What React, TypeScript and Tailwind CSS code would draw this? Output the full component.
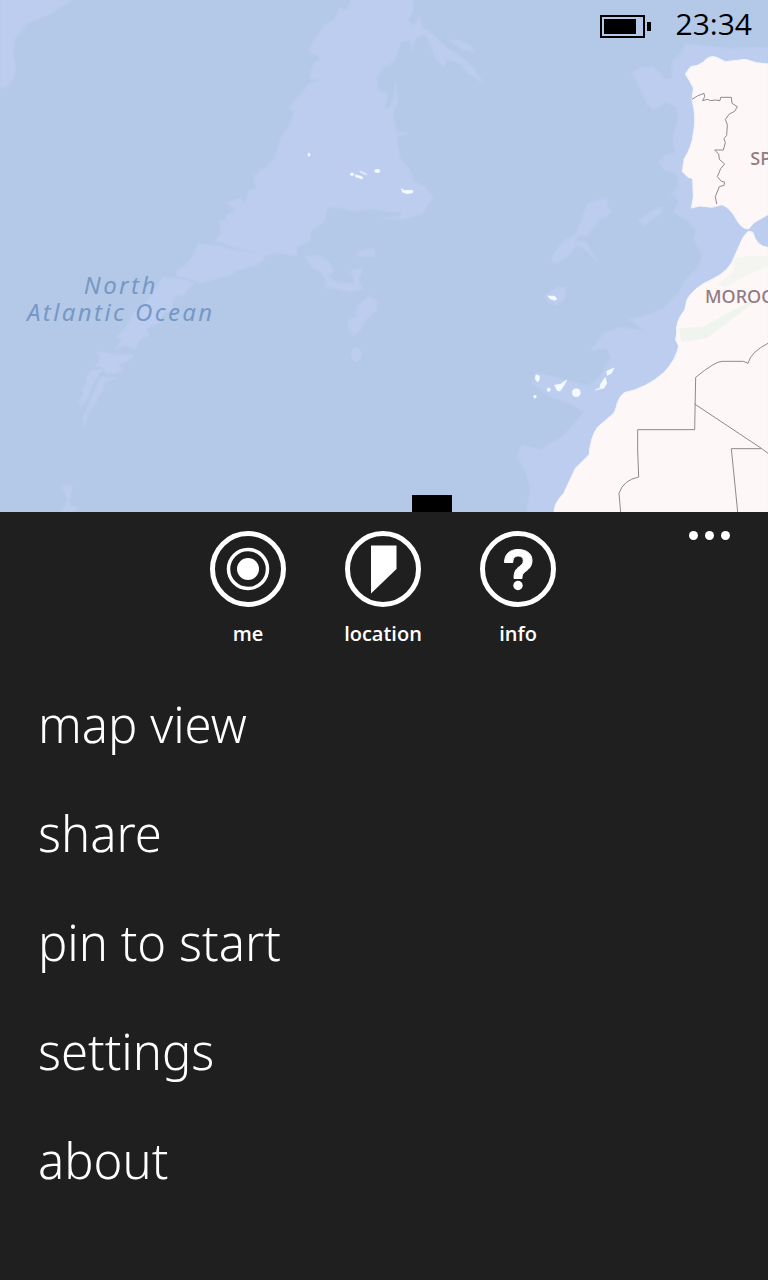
import type { ReactNode } from "react";

const shelves = [
  // north-west corner
  "M0 0H215L150 42L90 65L62 92L42 120L40 170L47 205L42 230L18 262L0 264Z",
  // mid-Atlantic ridge and Azores plateau
  "M1053 0L1040 32L1018 25L1003 60L975 75L950 110L926 152L948 166L962 172L938 198L928 236L962 239L928 250L900 288L886 300L870 320L882 342L862 388L845 408L822 480L805 492L795 508L780 508L768 530L760 525L768 565L748 572L735 612L722 596L682 608L708 630L680 645L676 662L658 664L664 700L646 724L668 728L690 738L730 748L768 756L700 750L660 738L594 732L580 768L556 796L530 815L534 828L580 838L602 849L640 838L690 826L710 810L768 796L792 778L790 768L830 758L888 767L892 742L930 720L934 690L950 680L973 664L983 622L1018 622L1060 632L1118 626L1170 636L1208 634L1200 648L1150 655L1208 658L1266 642L1280 620L1300 592L1275 562L1238 542L1234 515L1200 475L1192 430L1190 408L1224 400L1190 396L1178 350L1182 330L1194 308L1186 250L1180 300L1168 325L1150 326L1162 298L1160 280L1135 272L1128 234L1153 200L1184 182L1203 125L1230 120L1236 148L1248 114L1274 102L1294 138L1304 172L1330 198L1343 176L1382 192L1408 222L1450 250L1418 202L1382 170L1340 144L1298 104L1270 86L1258 52L1240 80L1222 60L1240 30L1238 0Z",
  "M1350 122L1380 122L1412 138L1422 156L1390 148Z",
  // south-western arm of the ridge
  "M490 832L530 836L582 848L550 884L520 890L514 930L488 942L478 968L440 984L446 1004L420 1020L404 1048L376 1034L346 1048L368 1020L350 1010L380 980L400 940L430 920Z",
  "M292 1056L340 1064L400 1066L384 1082L354 1092L368 1110L340 1120L318 1118L306 1100L286 1096L302 1080Z",
  "M306 1108L286 1136L270 1172L260 1198L248 1212L234 1210L250 1184L246 1168L262 1150L260 1130L274 1112Z",
  "M304 1132L344 1134L310 1150L310 1170L294 1190L288 1206L266 1234L258 1260L254 1278L248 1256L264 1224L276 1190Z",
  "M186 1458L216 1458L206 1516L236 1524L214 1536H184L204 1500Z",
  // seamounts south of the Azores
  "M916 770L960 768L990 788L1000 816L984 828L1010 848L1062 852L1060 820L1046 824L1060 808L1086 806L1076 842L1088 868L1050 874L1020 868L974 862L982 850L966 820L934 800Z",
  "M1076 756L1100 748L1122 746L1124 768H1070Z",
  "M1108 888L1130 904L1130 930L1102 954L1080 990L1062 1008L1044 982L1046 962L1070 948L1072 918Z",
  // Madeira rise
  "M1764 610L1820 594L1822 620L1834 632L1818 650L1800 656L1760 708L1740 706L1722 724L1756 724L1782 768L1792 784L1776 768L1750 744L1730 734L1704 768L1672 788H1660L1656 768L1690 724L1726 706L1752 640Z",
  "M1988 622L1980 642L1950 662L1932 678L1916 662L1938 644L1970 626Z",
  "M1632 890L1660 870L1672 862L1698 864L1696 882L1688 904L1668 916L1646 906Z",
  // continental shelf of Iberia and north-west Africa
  "M2304 142L2180 146L2056 132L2046 158L2018 182L2014 236L1996 238L1976 216L1960 202L1920 202L1896 222L1914 250L1930 285L1942 315L1962 328L2000 306L2030 322L2036 356L2018 420L2026 458L1998 466L1976 488L1994 510L2030 520L2034 560L2014 580L2038 600L2022 636L2062 662L2088 688L2082 720L2108 766L2096 800L2060 834L2038 876L1990 926L1940 946L1890 958L1938 994L1860 982L1812 1000L1776 1048L1820 1044L1834 1072L1800 1130L1764 1158L1700 1142L1610 1118L1596 1150L1650 1188L1720 1214L1752 1236L1690 1308L1620 1350L1566 1336L1552 1370L1580 1420L1592 1470L1580 1536H2304Z",
];

const land =
  "M2304 192L2270 188L2236 178L2176 185L2150 172Q2128 164 2110 186L2092 196L2072 200L2056 222L2070 245L2080 264L2076 300Q2090 350 2080 400Q2076 440 2052 478L2047 515L2064 532L2078 536L2080 590L2074 624L2100 618L2136 622L2166 614Q2192 624 2210 660Q2226 688 2246 687L2262 668L2304 644ZM2244 694L2228 714L2204 768Q2190 812 2136 838Q2084 860 2061 898L2054 930Q2026 964 2030 998L2027 1020L2036 1038Q2028 1080 1991 1118Q1940 1164 1872 1178Q1858 1190 1852 1208Q1846 1238 1836 1244L1792 1282Q1772 1310 1767 1364L1726 1405L1691 1480Q1662 1510 1662 1536H2304V742Q2270 740 2258 696Z";

const borders = [
  "M2076 298L2092 288L2112 280L2114 290L2108 302L2122 298L2132 302L2146 300L2160 302L2162 292H2194L2196 310L2212 320L2204 334L2188 342L2176 358L2182 374L2180 406L2172 416L2176 428L2170 450H2144L2156 462L2158 478L2174 492L2162 506L2152 530L2164 544L2174 546L2172 556L2158 560L2146 590L2150 612",
  "M2304 1030Q2252 1056 2244 1090L2230 1084H2166Q2146 1084 2087 1132L2084 1289H1913V1350L1916 1431Q1870 1440 1857 1480L1862 1536",
  "M2084 1212L2284 1345L2304 1360",
  "M2284 1346H2194L2213 1536",
];

function OceanMap() {
  return (
    <svg
      viewBox="0 0 2304 1536"
      className="block h-full w-full"
      preserveAspectRatio="xMidYMid slice"
      role="img"
      aria-label="Map"
    >
      <rect width="2304" height="1536" fill="#b4c9e7" />
      <g fill="#bdcdef">
        {shelves.map((d) => (
          <path key={d} d={d} stroke="#bacced" strokeWidth="5" strokeLinejoin="round" />
        ))}
        <ellipse cx="1069" cy="1063" rx="16" ry="21" />
      </g>
      <path d={land} fill="#fef7f7" stroke="#f4f4fa" strokeWidth="3" strokeLinejoin="round" />
      <g fill="#f0f4ee">
        <path d="M2204 775L2250 768L2304 768V800L2230 830L2180 860L2150 855L2200 815Z" opacity=".7" />
        <path d="M2036 985L2110 980L2200 930L2250 905L2290 890L2240 925L2160 985L2120 1015L2044 1026Z" />
      </g>
      <g fill="#f4fbff" stroke="#f4fbff" strokeWidth="2" strokeLinejoin="round">
        <ellipse cx="927" cy="464" rx="3" ry="5" />
        <ellipse cx="1056" cy="523" rx="5" ry="4" />
        <path d="M1066 524L1086 530L1088 537L1066 530Z" />
        <path d="M1080 512L1102 522L1100 525L1082 518Z" opacity=".6" />
        <ellipse cx="1132" cy="513" rx="8" ry="5" />
        <path d="M1204 566L1212 571H1238V578L1222 581L1208 577Z" />
        <path d="M1644 888L1664 889L1671 897L1664 901L1650 896Z" />
        <path d="M1608 1124L1618 1128V1140L1612 1146L1606 1136Z" />
        <path d="M1664 1156L1682 1152L1700 1140L1692 1156L1680 1173L1672 1172Z" />
        <circle cx="1729" cy="1178" r="12" />
        <circle cx="1646" cy="1169" r="5" />
        <circle cx="1605" cy="1190" r="4" />
        <path d="M1842 1104L1820 1114L1822 1126L1834 1120ZM1816 1132L1802 1152L1800 1164L1786 1170L1812 1164L1820 1150Z" />
      </g>
      <g fill="none" stroke="#8e8a8c" strokeWidth="3">
        {borders.map((d) => (
          <path key={d} d={d} />
        ))}
      </g>
    </svg>
  );
}

function StatusBar() {
  return (
    <header className="absolute inset-x-0 top-0 flex h-13 items-center justify-end gap-6 pr-4 text-black">
      <svg width="53" height="24" viewBox="0 0 53 24" role="img" aria-label="Battery">
        <rect x="2" y="2" width="43" height="21" fill="none" stroke="currentColor" strokeWidth="2" />
        <rect x="5" y="5" width="32" height="15" fill="currentColor" />
        <rect x="48" y="8" width="4" height="9" fill="currentColor" />
      </svg>
      <time className="pb-1 text-[30px] leading-[48px]">23:34</time>
    </header>
  );
}

function AppBarButton({ label, children }: { label: string; children: ReactNode }) {
  return (
    <button type="button" className="flex w-[135px] flex-col items-center gap-3">
      <svg width="78" height="78" viewBox="0 0 78 78" fill="none" stroke="currentColor" aria-hidden="true">
        <circle cx="39" cy="39" r="35.5" strokeWidth="5" />
        {children}
      </svg>
      <span className="text-xl leading-7 font-semibold">{label}</span>
    </button>
  );
}

const menuItems = ["map view", "share", "pin to start", "settings", "about"];

export default function App() {
  return (
    <div className="flex min-h-screen flex-col bg-[#1f1f1f] font-['Open_Sans','Noto_Sans',sans-serif] text-white">
      <section className="relative aspect-[3/2] w-full overflow-hidden">
        <OceanMap />
        <p className="absolute top-[53%] left-[3.5%] text-center font-['Noto_Sans',sans-serif] text-2xl leading-[27px] tracking-widest text-[#7698c6] italic">
          North
          <br />
          Atlantic Ocean
        </p>
        <span className="absolute top-[28.5%] left-[97.7%] font-['Noto_Sans',sans-serif] text-lg leading-6 font-medium text-[#927b83]">
          SPAIN
        </span>
        <span className="absolute top-[55.5%] left-[91.8%] font-['Noto_Sans',sans-serif] text-lg leading-6 font-medium text-[#927b83]">
          MOROCCO
        </span>
        <div className="absolute bottom-0 left-[412px] h-[17px] w-10 bg-black" />
        <StatusBar />
      </section>

      <section className="flex-1">
        <div className="grid grid-cols-[1fr_auto_1fr] pt-[18px]">
          <div className="col-start-2 flex pr-0.5">
            <AppBarButton label="me">
              <circle cx="39" cy="39" r="19.5" strokeWidth="3.5" />
              <circle cx="39" cy="39" r="11" fill="currentColor" stroke="none" />
            </AppBarButton>
            <AppBarButton label="location">
              <path d="M27 15.5H52.5V39L27 63.5Z" fill="currentColor" stroke="none" />
            </AppBarButton>
            <AppBarButton label="info">
              <path
                d="M25.5 32.5C25.5 24 31 19.5 39 19.5C47.5 19.5 53 23.5 53 30.5C53 36 50 39 46.5 41.5C43.5 43.5 43 45 43 48.5H35C35 42 36.5 39.5 40.5 36.5C43 34.5 44.3 33.5 44.3 30.5C44.3 27.5 42.3 26 39.3 26C35.5 26 33.8 28.5 33.8 32.5Z"
                fill="currentColor"
                stroke="currentColor"
                strokeWidth="1"
              />
              <circle cx="39" cy="55.5" r="4.7" fill="currentColor" stroke="none" />
            </AppBarButton>
          </div>
          <button type="button" aria-label="more" className="mr-[38px] flex h-[10px] items-center gap-[7px] self-start justify-self-end">
            <span className="size-[9px] rounded-full bg-white" />
            <span className="size-[9px] rounded-full bg-white" />
            <span className="size-[9px] rounded-full bg-white" />
          </button>
        </div>
        <nav className="pt-[22px] pb-8">
          <ul>
            {menuItems.map((item) => (
              <li key={item}>
                <button
                  type="button"
                  className="block h-[109px] w-full px-[38px] text-left font-['Noto_Sans',sans-serif] text-[49px] leading-[109px] font-light"
                >
                  {item}
                </button>
              </li>
            ))}
          </ul>
        </nav>
      </section>
    </div>
  );
}
